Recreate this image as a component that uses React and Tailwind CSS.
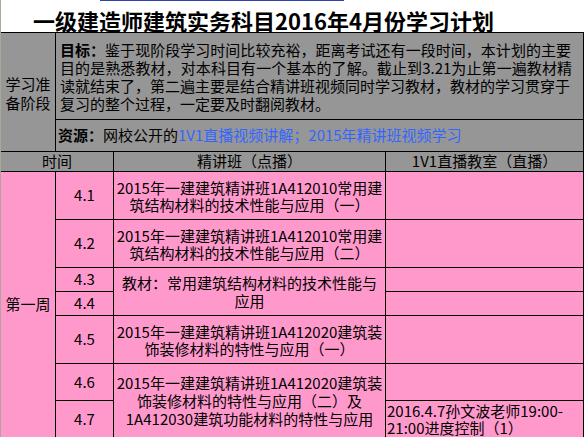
import React from 'react';

const pink = 'bg-[#ff99cc]';
const gray = 'bg-[#969696]';

const Lines = ({ lines, className = '' }) => (
  <div className={`flex flex-col items-center justify-center text-center whitespace-nowrap ${className}`}>
    {lines.map((l, i) => (
      <div key={i}>{l}</div>
    ))}
  </div>
);

export default function App() {
  return (
    <div className="w-[586px] h-[437px] overflow-hidden bg-white border-l border-[#aca899] font-['Noto_Sans_CJK_SC',sans-serif] text-[15px] text-black">
      {/* Title */}
      <div className="h-[32px]">
        <div className="ml-[99px] w-[244px] h-px bg-[#3040b0]" />
        <div className="pl-[32px] pt-[7px] text-[22px] leading-[24px] font-bold whitespace-nowrap">
          一级建造师建筑实务科目2016年4月份学习计划
        </div>
      </div>

      {/* Sheet */}
      <div className="grid w-[583px] grid-cols-[54px_57px_271px_197px] grid-rows-[86px_31px_19px_47px_47px_23px_23px_47px_36px_36px] gap-px bg-black border-t border-r border-b border-black">
        {/* Preparation stage */}
        <div className={`${gray} col-start-1 row-start-1 row-span-2 flex flex-col items-center justify-center leading-[19px] pt-[2px]`}>
          <div>学习准</div>
          <div>备阶段</div>
        </div>
        <div className={`${gray} col-start-2 col-span-3 row-start-1 pl-1 pt-2 leading-[18px] whitespace-nowrap`}>
          <div className="w-[511px] [text-align-last:justify]">
            <span className="font-bold">目标：</span>鉴于现阶段学习时间比较充裕，距离考试还有一段时间，本计划的主要
          </div>
          <div className="w-[512px] [text-align-last:justify]">目的是熟悉教材，对本科目有一个基本的了解。截止到3.21为止第一遍教材精</div>
          <div className="w-[508px] [text-align-last:justify]">读就结束了，第二遍主要是结合精讲班视频同时学习教材，教材的学习贯穿于</div>
          <div>复习的整个过程，一定要及时翻阅教材。</div>
        </div>
        <div className={`${gray} col-start-2 col-span-3 row-start-2 flex items-center pl-[2px] whitespace-nowrap`}>
          <span className="font-bold">资源：</span>
          <span>网校公开的</span>
          <span className="text-[#3366ff]">1V1直播视频讲解；2015年精讲班视频学习</span>
        </div>

        {/* Header */}
        <div className={`${gray} col-start-1 col-span-2 row-start-3 flex items-center justify-center`}>时间</div>
        <div className={`${gray} col-start-3 row-start-3 flex items-center justify-center`}>精讲班（点播）</div>
        <div className={`${gray} col-start-4 row-start-3 flex items-center justify-center`}>1V1直播教室（直播）</div>

        {/* Week */}
        <div className={`${pink} col-start-1 row-start-4 row-span-7 flex items-center justify-center`}>第一周</div>

        {/* Dates */}
        <div className={`${pink} col-start-2 row-start-4 flex items-center justify-center`}>4.1</div>
        <div className={`${pink} col-start-2 row-start-5 flex items-center justify-center`}>4.2</div>
        <div className={`${pink} col-start-2 row-start-6 flex items-center justify-center`}>4.3</div>
        <div className={`${pink} col-start-2 row-start-7 flex items-center justify-center`}>4.4</div>
        <div className={`${pink} col-start-2 row-start-8 flex items-center justify-center`}>4.5</div>
        <div className={`${pink} col-start-2 row-start-9 flex items-center justify-center`}>4.6</div>
        <div className={`${pink} col-start-2 row-start-10 flex items-center justify-center`}>4.7</div>

        {/* Recorded lessons */}
        <Lines
          className={`${pink} col-start-3 row-start-4 leading-[17px]`}
          lines={['2015年一建建筑精讲班1A412010常用建', '筑结构材料的技术性能与应用（一）']}
        />
        <Lines
          className={`${pink} col-start-3 row-start-5 leading-[17px]`}
          lines={['2015年一建建筑精讲班1A412010常用建', '筑结构材料的技术性能与应用（二）']}
        />
        <Lines
          className={`${pink} col-start-3 row-start-6 row-span-2 leading-[18px]`}
          lines={['教材：常用建筑结构材料的技术性能与', '应用']}
        />
        <Lines
          className={`${pink} col-start-3 row-start-8 leading-[17px]`}
          lines={['2015年一建建筑精讲班1A412020建筑装', '饰装修材料的特性与应用（一）']}
        />
        <Lines
          className={`${pink} col-start-3 row-start-9 row-span-2 leading-[18px]`}
          lines={['2015年一建建筑精讲班1A412020建筑装', '饰装修材料的特性与应用（二）及', '1A412030建筑功能材料的特性与应用']}
        />

        {/* Live classroom */}
        <div className={`${pink} col-start-4 row-start-4`} />
        <div className={`${pink} col-start-4 row-start-5`} />
        <div className={`${pink} col-start-4 row-start-6`} />
        <div className={`${pink} col-start-4 row-start-7`} />
        <div className={`${pink} col-start-4 row-start-8`} />
        <div className={`${pink} col-start-4 row-start-9`} />
        <div className={`${pink} col-start-4 row-start-10 flex flex-col justify-center pl-[1px] leading-[17px] whitespace-nowrap`}>
          <div>2016.4.7孙文波老师19:00-</div>
          <div>21:00进度控制（1）</div>
        </div>
      </div>
    </div>
  );
}
